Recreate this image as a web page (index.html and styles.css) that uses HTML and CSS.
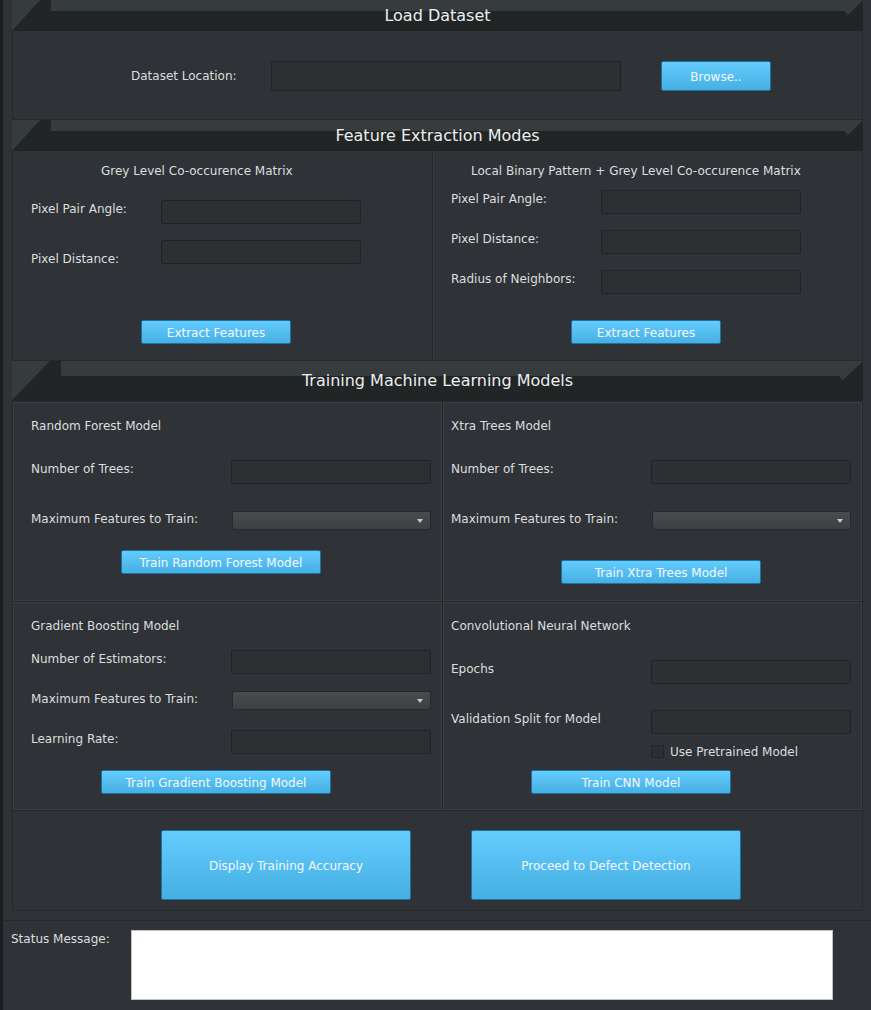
FILE: index.html
```html
<!DOCTYPE html>
<html>
<head>
<meta charset="utf-8">
<link rel="stylesheet" href="styles.css">
</head>
<body>
<div class="frame">
  <div class="head h-a"><span>Load Dataset</span></div>
  <div class="panel p1">
    <div class="row r30">
      <div class="lbl l-ds">Dataset Location:</div>
      <div class="input in-ds"></div>
      <div class="btn b-browse">Browse..</div>
    </div>
  </div>

  <div class="head h-a"><span>Feature Extraction Modes</span></div>
  <div class="panel p2">
    <div class="col c-left">
      <div class="title t-gl">Grey Level Co-occurence Matrix</div>
      <div class="row r-g1"><div class="lbl lw130">Pixel Pair Angle:</div><div class="input in200"></div></div>
      <div class="row r-g2"><div class="lbl lw130 low">Pixel Distance:</div><div class="input in200"></div></div>
      <div class="btn b-ef1">Extract Features</div>
    </div>
    <div class="col c-right">
      <div class="title t-lbp">Local Binary Pattern + Grey Level Co-occurence Matrix</div>
      <div class="row r-l1"><div class="lbl lw150">Pixel Pair Angle:</div><div class="input in200"></div></div>
      <div class="row r-l2"><div class="lbl lw150">Pixel Distance:</div><div class="input in200"></div></div>
      <div class="row r-l2"><div class="lbl lw150">Radius of Neighbors:</div><div class="input in200"></div></div>
      <div class="btn b-ef2">Extract Features</div>
    </div>
  </div>

  <div class="head h-b"><span>Training Machine Learning Models</span></div>
  <div class="panel p3">
    <div class="box bx-l">
      <div class="title t-box">Random Forest Model</div>
      <div class="row r-m26"><div class="lbl lw200">Number of Trees:</div><div class="input in200"></div></div>
      <div class="row rc r-m27"><div class="lbl lw200 flat">Maximum Features to Train:</div><div class="combo"><i class="arrow"></i></div></div>
      <div class="btn b-rf">Train Random Forest Model</div>
    </div>
    <div class="box bx-r">
      <div class="title t-box">Xtra Trees Model</div>
      <div class="row r-m26"><div class="lbl lw200">Number of Trees:</div><div class="input in200"></div></div>
      <div class="row rc r-m27"><div class="lbl lw200 flat">Maximum Features to Train:</div><div class="combo"><i class="arrow"></i></div></div>
      <div class="btn b-xt">Train Xtra Trees Model</div>
    </div>
    <div class="box bx-l">
      <div class="title t-box">Gradient Boosting Model</div>
      <div class="row r-m16"><div class="lbl lw200">Number of Estimators:</div><div class="input in200"></div></div>
      <div class="row rc r-m17"><div class="lbl lw200 flat">Maximum Features to Train:</div><div class="combo"><i class="arrow"></i></div></div>
      <div class="row r-m20"><div class="lbl lw200">Learning Rate:</div><div class="input in200"></div></div>
      <div class="btn b-gb">Train Gradient Boosting Model</div>
    </div>
    <div class="box bx-r">
      <div class="title t-box">Convolutional Neural Network</div>
      <div class="row r-m26"><div class="lbl lw200">Epochs</div><div class="input in200"></div></div>
      <div class="row r-m26"><div class="lbl lw200">Validation Split for Model</div><div class="input in200"></div></div>
      <div class="row r-chk"><span class="check"></span><span class="chk-text">Use Pretrained Model</span></div>
      <div class="btn b-cnn">Train CNN Model</div>
    </div>
  </div>

  <div class="panel p4">
    <div class="btn big b-acc">Display Training Accuracy</div>
    <div class="btn big b-proc">Proceed to Defect Detection</div>
  </div>
</div>

<div class="status">
  <div class="lbl l-status">Status Message:</div>
  <div class="status-box"></div>
</div>
</body>
</html>
```

FILE: styles.css
```css
html, body {
  margin: 0;
  padding: 0;
}
body {
  background: #2f3337;
  font-family: "DejaVu Sans", "Liberation Sans", sans-serif;
  font-size: 12px;
  line-height: 16px;
  color: #dcdedf;
  border-left: 3px solid #1b1d1f;
  height: 1010px;
  box-sizing: border-box;
  overflow: hidden;
}

.frame {
  margin-left: 9px;
  width: 851px;
}

/* section headers */
.head {
  position: relative;
  height: 31px;
  background: #212526;
  display: flex;
  align-items: center;
  justify-content: center;
  font-size: 16px;
  line-height: 20px;
  color: #eceeee;
}
.head::before {
  content: "";
  position: absolute;
  left: 0; top: 0; right: 0; bottom: 0;
  background: #363c3e;
}
.h-a::before {
  clip-path: polygon(0 0, 100% 0, calc(100% - 15px) 15px, calc(100% - 19px) 11px, 39px 11px, 39px 0, 28px 0, 0 31px);
}
.h-b {
  height: 40px;
}
.h-b::before {
  clip-path: polygon(0 0, 100% 0, calc(100% - 20px) 19px, calc(100% - 24px) 15px, 49px 15px, 49px 0, 38px 0, 0 39px);
}
.head span {
  position: relative;
}

.panel {
  box-sizing: border-box;
  border: 1px solid #25292b;
  border-top: none;
}

.row {
  display: flex;
  align-items: flex-start;
  height: 24px;
}
.r30 { height: 30px; }
.rc { height: 19px; }
.lbl {
  flex: none;
  white-space: nowrap;
  padding-top: 1px;
}
.lbl.flat { padding-top: 0; }
.title {
  white-space: nowrap;
}

.input {
  flex: none;
  box-sizing: border-box;
  background: #2c3033;
  border: 1px solid #1f2325;
  border-radius: 2px;
}
.in200 {
  width: 200px;
  height: 24px;
}

.btn {
  flex: none;
  box-sizing: border-box;
  height: 24px;
  padding-top: 2px;
  display: flex;
  align-items: center;
  justify-content: center;
  background: linear-gradient(#64ccfd, #46afe3);
  border: 1px solid #1d73a2;
  border-radius: 2px;
  color: #f3f9fd;
  white-space: nowrap;
}

/* panel 1 */
.p1 {
  height: 89px;
  padding-top: 30px;
}
.l-ds {
  margin-left: 118px;
  width: 140px;
}
.lbl.l-ds {
  padding-top: 7px;
}
.in-ds {
  width: 350px;
  height: 30px;
}
.b-browse {
  width: 110px;
  height: 30px;
  margin-left: 40px;
}

/* panel 2 */
.p2 {
  height: 210px;
  display: flex;
}
.col {
  box-sizing: border-box;
}
.c-left {
  width: 420px;
  border-right: 1px solid #25292b;
  box-shadow: 1px 0 0 #363b3e;
}
.c-right {
  flex: 1;
}
.t-gl {
  margin: 12px 0 0 88px;
}
.t-lbp {
  margin: 12px 0 0 38px;
}
.lw130 { width: 130px; margin-left: 18px; }
.lw150 { width: 150px; margin-left: 18px; }
.lbl.low { padding-top: 11px; }
.r-g1 { margin-top: 21px; }
.r-g2 { margin-top: 16px; }
.r-l1 { margin-top: 11px; }
.r-l2 { margin-top: 16px; }
.b-ef1 {
  width: 150px;
  margin: 56px 0 0 128px;
}
.b-ef2 {
  width: 150px;
  margin: 26px 0 0 138px;
}

/* panel 3 */
.p3 {
  height: 409px;
  border-top: 1px solid #25292b;
  background: #222527;
  display: grid;
  grid-template-columns: 429px 419px;
  grid-template-rows: 199px 208px;
  gap: 1px;
}
.box {
  box-sizing: border-box;
  background: #2f3337;
  border: 1px solid #3a3f42;
}
.t-box {
  margin-top: 15px;
}
.bx-l .t-box { margin-left: 17px; }
.bx-r .t-box { margin-left: 7px; }
.bx-l .lw200 { margin-left: 17px; }
.bx-r .lw200 { margin-left: 7px; }
.lw200 { width: 200px; }
.r-m26 { margin-top: 26px; }
.r-m27 { margin-top: 27px; }
.r-m16 { margin-top: 16px; }
.r-m17 { margin-top: 17px; }
.r-m20 { margin-top: 20px; }

.combo {
  position: relative;
  flex: none;
  box-sizing: border-box;
  width: 199px;
  height: 19px;
  margin-left: 1px;
  background: linear-gradient(#484c4f, #3c4043);
  border: 1px solid #27292b;
  border-radius: 2px;
}
.arrow {
  position: absolute;
  right: 7px;
  top: 7px;
  width: 0;
  height: 0;
  border-left: 3px solid transparent;
  border-right: 3px solid transparent;
  border-top: 4px solid #c9cbcc;
}

.b-rf {
  width: 200px;
  margin: 20px 0 0 107px;
}
.b-xt {
  width: 200px;
  margin: 30px 0 0 117px;
}
.b-gb {
  width: 230px;
  margin: 16px 0 0 87px;
}
.r-chk {
  margin-top: 10px;
  height: 16px;
}
.check {
  flex: none;
  box-sizing: border-box;
  width: 13px;
  height: 13px;
  margin: 1px 0 0 207px;
  background: #2b2f32;
  border: 1px solid #222527;
}
.chk-text {
  margin-left: 6px;
  white-space: nowrap;
}
.b-cnn {
  width: 200px;
  margin: 10px 0 0 87px;
}

/* panel 4 */
.p4 {
  height: 101px;
  border-top: 1px solid #25292b;
  padding-top: 19px;
  display: flex;
  align-items: flex-start;
}
.big {
  height: 70px;
}
.b-acc {
  width: 250px;
  margin-left: 148px;
}
.b-proc {
  width: 270px;
  margin-left: 60px;
}

/* status */
.status {
  margin-top: 9px;
  border-top: 1px solid #25292b;
  display: flex;
  align-items: flex-start;
  padding-top: 9px;
}
.l-status {
  margin-left: 8px;
  width: 120px;
}
.status-box {
  box-sizing: border-box;
  width: 702px;
  height: 70px;
  background: #ffffff;
  border: 1px solid #bfc1c2;
}
```
